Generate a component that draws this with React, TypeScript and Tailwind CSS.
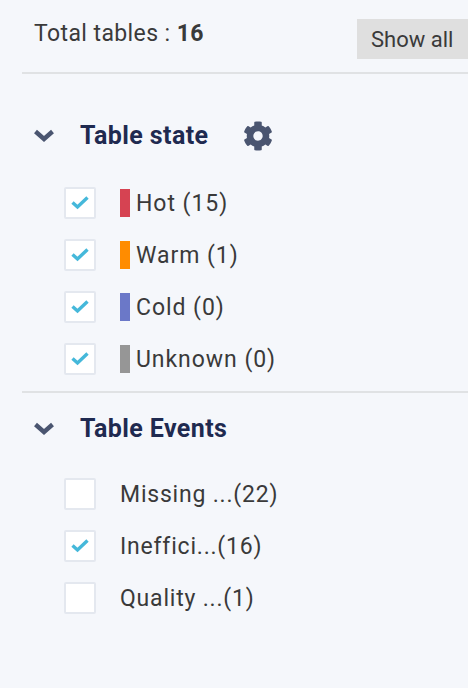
import React from 'react';

const Chevron: React.FC = () => (
  <svg width="22" height="16" viewBox="0 0 22 16" fill="none" className="shrink-0 -mr-[2px]">
    <path d="M2.5 3.5 L11 11 L19.5 3.5" stroke="#4a5570" strokeWidth="4.4" strokeLinejoin="miter" />
  </svg>
);

const Gear: React.FC = () => (
  <svg width="30" height="30" viewBox="0 0 512 512" fill="#4a5570">
    <path d="M487.4 315.7l-42.6-24.6c4.3-23.2 4.3-47 0-70.2l42.6-24.6c4.9-2.8 7.1-8.6 5.5-14-11.1-35.6-30-67.8-54.7-94.6-3.8-4.1-10-5.1-14.8-2.3L380.8 110c-17.9-15.4-38.5-27.3-60.8-35.1V25.8c0-5.6-3.9-10.5-9.4-11.7-36.7-8.2-74.3-7.8-109.2 0-5.5 1.2-9.4 6.1-9.4 11.7V75c-22.2 7.9-42.8 19.8-60.8 35.1L88.7 85.5c-4.9-2.8-11-1.9-14.8 2.3-24.7 26.7-43.6 58.9-54.7 94.6-1.7 5.4.6 11.2 5.5 14L67.3 221c-4.3 23.2-4.3 47 0 70.2l-42.6 24.6c-4.9 2.8-7.1 8.6-5.5 14 11.1 35.6 30 67.8 54.7 94.6 3.8 4.1 10 5.1 14.8 2.3l42.6-24.6c17.9 15.4 38.5 27.3 60.8 35.1v49.2c0 5.6 3.9 10.5 9.4 11.7 36.7 8.2 74.3 7.8 109.2 0 5.5-1.2 9.4-6.1 9.4-11.7v-49.2c22.2-7.9 42.8-19.8 60.8-35.1l42.6 24.6c4.9 2.8 11 1.9 14.8-2.3 24.7-26.7 43.6-58.9 54.7-94.6 1.5-5.5-.7-11.3-5.6-14.1zM256 336c-44.1 0-80-35.9-80-80s35.9-80 80-80 80 35.9 80 80-35.9 80-80 80z" />
  </svg>
);

const CheckBox: React.FC<{ checked: boolean }> = ({ checked }) => (
  <div className="w-8 h-8 shrink-0 bg-white border-2 border-[#e4e8ef] rounded-[2px] flex items-center justify-center">
    {checked && (
      <svg width="18" height="14" viewBox="0 0 18 14" fill="none">
        <path d="M1.5 6.5 L6.5 11 L16.5 1.5" stroke="#45b8da" strokeWidth="3.4" />
      </svg>
    )}
  </div>
);

const states = [
  { label: 'Hot (15)', color: 'bg-[#d64352]' },
  { label: 'Warm (1)', color: 'bg-[#ff8c00]' },
  { label: 'Cold (0)', color: 'bg-[#6b78c8]' },
  { label: 'Unknown (0)', color: 'bg-[#969696]' },
];

const events = [
  { label: 'Missing ...(22)', checked: false },
  { label: 'Ineffici...(16)', checked: true },
  { label: 'Quality ...(1)', checked: false },
];

const App: React.FC = () => {
  return (
    <div className="w-[468px] h-[688px] overflow-hidden bg-[#f5f7fb] pl-[22px] font-['Roboto',sans-serif] text-[#3a3a3a]">
      <div className="h-[74px] border-b-2 border-[#e0e2e4] flex items-start justify-between">
        <div className="ml-[12px] mt-[19px] text-[23px] leading-[30px] tracking-[0.4px]">
          Total tables : <span className="font-bold">16</span>
        </div>
        <button className="mt-[19px] w-[111px] h-[40px] bg-[#dfdfdf] text-[22px] text-left pl-[14px]">
          Show all
        </button>
      </div>

      <div className="mt-[44px] ml-[11px] flex items-center h-[36px]">
        <Chevron />
        <span className="ml-[27px] text-[25px] font-bold text-[#1f2a50] tracking-[0.4px]">Table state</span>
        <span className="ml-[35px] flex"><Gear /></span>
      </div>

      <div className="mt-[33px] ml-[42px] flex flex-col gap-5">
        {states.map((s) => (
          <div key={s.label} className="flex items-center h-8">
            <CheckBox checked />
            <span className={`ml-[24px] w-[10px] h-[28px] ${s.color}`} />
            <span className="ml-[6px] mt-[2px] text-[23px] tracking-[0.95px]">{s.label}</span>
          </div>
        ))}
      </div>

      <div className="mt-[16px] border-t-2 border-[#e0e2e4]" />

      <div className="mt-[18px] ml-[11px] flex items-center h-[36px]">
        <Chevron />
        <span className="ml-[27px] text-[25px] font-bold text-[#1f2a50] tracking-[0.4px]">Table Events</span>
      </div>

      <div className="mt-[31px] ml-[42px] flex flex-col gap-5">
        {events.map((e) => (
          <div key={e.label} className="flex items-center h-8">
            <CheckBox checked={e.checked} />
            <span className="ml-[24px] mt-[2px] text-[23px] tracking-[0.8px]">{e.label}</span>
          </div>
        ))}
      </div>
    </div>
  );
};

export default App;
